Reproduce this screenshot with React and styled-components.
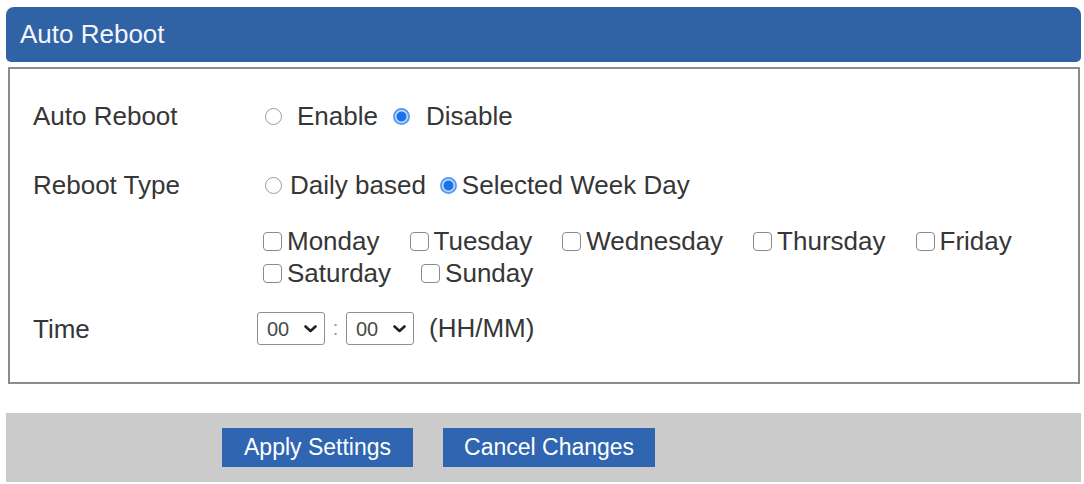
import React from "react";
import styled, { createGlobalStyle } from "styled-components";

const GlobalStyle = createGlobalStyle`
  html, body {
    margin: 0;
    padding: 0;
    background: #ffffff;
  }
  body {
    font-family: "Liberation Sans", Arial, sans-serif;
    color: #363636;
  }
`

const Page = styled.div`
  width: 1075px;
  padding: 7px 3px 0 6px;
`

const Header = styled.div`
  height: 55px;
  display: flex;
  align-items: center;
  padding-left: 14px;
  background: #3062a6;
  border-radius: 8px 8px 5px 5px;
  color: #f3f6fb;
  font-size: 26px;
`

const Box = styled.div`
  margin: 5px 1px 0 2px;
  border: 2px solid #8c8c8c;
  padding: 31px 0 37px 23px;
`

const Row = styled.div`
  display: flex;
  align-items: center;
  min-height: 32px;
  margin-top: ${props => props.$space || 0}px;
`

const Label = styled.div`
  flex: none;
  width: 224px;
  font-size: 26px;
  line-height: 32px;
  color: #363636;
`

const Options = styled.div`
  display: flex;
  align-items: center;
  padding-left: 8px;
`

const Option = styled.label`
  display: inline-flex;
  align-items: center;
  gap: ${props => props.$gap}px;
  margin-left: ${props => props.$space || 0}px;
  font-size: 26px;
  line-height: 32px;
`

const Radio = styled.input`
  appearance: none;
  box-sizing: border-box;
  width: 17px;
  height: 17px;
  margin: 0;
  border: 1px solid #9a9a9a;
  border-radius: 50%;
  background: #ffffff;

  &:checked {
    border: 2px solid #5b9cf0;
    background: radial-gradient(circle, #1a73e8 0 4.5px, #cfe2fb 5.5px);
  }
`

const DayList = styled.div`
  display: flex;
  flex-wrap: wrap;
  column-gap: 30px;
  width: 815px;
  padding-left: 6px;
`

const Day = styled.label`
  display: inline-flex;
  align-items: center;
  gap: 5px;
  font-size: 26px;
  line-height: 32px;
`

const Check = styled.input`
  appearance: none;
  box-sizing: border-box;
  width: 19px;
  height: 19px;
  margin: 0;
  border: 1.5px solid #8a8a8a;
  border-radius: 4px;
  background: #ffffff;
`

const SelectWrap = styled.div`
  position: relative;
  width: 68px;
  height: 33px;
`

const Select = styled.select`
  appearance: none;
  width: 100%;
  height: 100%;
  padding: 0 0 0 9px;
  border: 1px solid #8f8f8f;
  border-radius: 3px;
  background: #ffffff;
  font-family: "Liberation Sans", Arial, sans-serif;
  font-size: 20px;
  color: #4a4a4a;
`

const Chevron = styled.svg`
  position: absolute;
  right: 8px;
  top: 13px;
  pointer-events: none;
`

const Colon = styled.span`
  width: 21px;
  text-align: center;
  font-size: 20px;
  color: #9a9a9a;
`

const Hint = styled.span`
  margin-left: 15px;
  font-size: 26px;
`

const Bar = styled.div`
  margin-top: 29px;
  height: 69px;
  display: flex;
  align-items: center;
  gap: 30px;
  padding-left: 216px;
  background: #cbcbcb;
`

const Button = styled.button`
  height: 39px;
  padding: 0 ${props => props.$pad || 22}px;
  border: none;
  background: #2f65b1;
  color: #ffffff;
  font-family: "Liberation Sans", Arial, sans-serif;
  font-size: 23px;
  cursor: pointer;
`

const days = ["Monday", "Tuesday", "Wednesday", "Thursday", "Friday", "Saturday", "Sunday"];
const hours = Array.from({ length: 24 }, (_, i) => String(i).padStart(2, "0"));
const minutes = Array.from({ length: 60 }, (_, i) => String(i).padStart(2, "0"));

function TimeSelect({ values }) {
    return (
        <SelectWrap>
            <Select defaultValue="00">
                {values.map(v => <option key={v} value={v}>{v}</option>)}
            </Select>
            <Chevron width="13" height="8" viewBox="0 0 13 8">
                <path d="M1.5 1.5 L6.5 6 L11.5 1.5" fill="none" stroke="#222" strokeWidth="2.6" strokeLinecap="round" strokeLinejoin="round" />
            </Chevron>
        </SelectWrap>
    )
}

function App() {
    return (
        <Page>
            <GlobalStyle />
            <Header>Auto Reboot</Header>
            <Box>
                <Row>
                    <Label>Auto Reboot</Label>
                    <Options>
                        <Option $gap={15}>
                            <Radio type="radio" name="auto" />
                            Enable
                        </Option>
                        <Option $gap={16} $space={15}>
                            <Radio type="radio" name="auto" defaultChecked />
                            Disable
                        </Option>
                    </Options>
                </Row>
                <Row $space={37}>
                    <Label>Reboot Type</Label>
                    <Options>
                        <Option $gap={8}>
                            <Radio type="radio" name="type" />
                            Daily based
                        </Option>
                        <Option $gap={5} $space={14}>
                            <Radio type="radio" name="type" defaultChecked />
                            Selected Week Day
                        </Option>
                    </Options>
                </Row>
                <Row $space={24}>
                    <Label />
                    <DayList>
                        {days.map(d => (
                            <Day key={d}>
                                <Check type="checkbox" />
                                {d}
                            </Day>
                        ))}
                    </DayList>
                </Row>
                <Row $space={23}>
                    <Label>Time</Label>
                    <TimeSelect values={hours} />
                    <Colon>:</Colon>
                    <TimeSelect values={minutes} />
                    <Hint>(HH/MM)</Hint>
                </Row>
            </Box>
            <Bar>
                <Button>Apply Settings</Button>
                <Button $pad={21}>Cancel Changes</Button>
            </Bar>
        </Page>
    )
}

export default App;
